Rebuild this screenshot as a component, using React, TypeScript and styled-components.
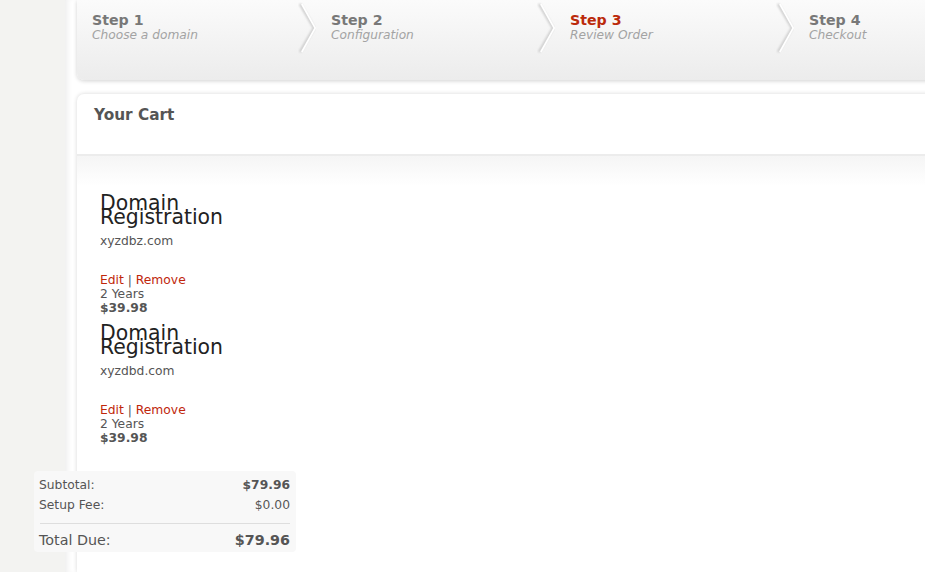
import React from "react";
import styled, { createGlobalStyle } from "styled-components";

const Global = createGlobalStyle`
  html, body { margin: 0; padding: 0; background: #f3f3f1; overflow: hidden; }
  body { font-family: "DejaVu Sans", Verdana, sans-serif; }
  * { box-sizing: border-box; }
`;

const Page = styled.div`
  display: flex;
  min-height: 572px;
  width: 100%;
`;

const Sidebar = styled.div`
  width: 65px;
  flex: none;
  background: #f3f3f1;
`;

const Main = styled.div`
  flex: 1;
  min-width: 0;
  background: #ffffff;
  box-shadow: inset 6px 0 6px -4px rgba(0, 0, 0, 0.08);
  padding: 0 0 0 12px;
  display: flex;
  flex-direction: column;
`;

const StepsBar = styled.div`
  display: flex;
  height: 80px;
  margin-right: -12px;
  border-radius: 0 0 7px 7px;
  background: linear-gradient(#fbfbfb, #ececec);
  box-shadow: 0 1px 4px rgba(0, 0, 0, 0.18);
`;

const Step = styled.div<{ $last?: boolean }>`
  display: flex;
  flex: ${(p) => (p.$last ? "1" : "none")};
  width: ${(p) => (p.$last ? "auto" : "239px")};
  padding: 12px 0 0 15px;
`;

const StepText = styled.div`
  flex: 1;
`;

const StepTitle = styled.div<{ $active?: boolean }>`
  font-size: 14.2px;
  line-height: 17px;
  font-weight: bold;
  color: ${(p) => (p.$active ? "#bb2a0b" : "#787878")};
`;

const StepSub = styled.div`
  font-size: 12.2px;
  line-height: 13px;
  font-style: italic;
  color: #a3a3a3;
`;

const Chevron = styled.svg`
  flex: none;
  width: 18px;
  height: 52px;
  margin-top: -10px;
`;

const CartPanel = styled.div`
  margin-top: 14px;
  margin-right: -12px;
  flex: 1;
  background: #fff;
  border-radius: 7px 0 0 0;
  box-shadow: 0 0 4px rgba(0, 0, 0, 0.16);
  display: flex;
  flex-direction: column;
`;

const CartHeader = styled.div`
  height: 62px;
  padding: 12px 17px;
  font-size: 15.3px;
  line-height: 19px;
  font-weight: bold;
  color: #555;
  border-bottom: 2px solid #ececec;
`;

const CartBody = styled.div`
  background: linear-gradient(#f5f5f5, #ffffff 30px);
  padding: 38px 0 20px 23px;
  display: flex;
  flex-direction: column;
  gap: 9px;
`;

const Item = styled.div`
  display: flex;
  flex-direction: column;
`;

const ItemTitle = styled.div`
  font-size: 20.4px;
  line-height: 14px;
  color: #222;
  width: 130px;
  padding-top: 2px;
`;

const ItemDomain = styled.div`
  margin-top: 10px;
  font-size: 12.3px;
  line-height: 15px;
  color: #555;
`;

const Actions = styled.div`
  margin-top: 24px;
  font-size: 12.3px;
  line-height: 14px;
  color: #555;
`;

const ActionLink = styled.a`
  color: #c0270b;
  text-decoration: none;
`;

const ItemLine = styled.div<{ $bold?: boolean }>`
  font-size: 12.3px;
  line-height: 14px;
  color: #555;
  font-weight: ${(p) => (p.$bold ? "bold" : "normal")};
`;

const Totals = styled.div`
  margin: 17px 0 0 -66px;
  width: 262px;
  background: #f8f8f8;
  border-radius: 4px;
  padding: 4px 6px 2px 5px;
`;

const TotalRow = styled.div<{ $big?: boolean }>`
  display: flex;
  justify-content: space-between;
  font-size: ${(p) => (p.$big ? "14.3px" : "12.3px")};
  line-height: 20px;
  color: #555;
`;

const Value = styled.span<{ $bold?: boolean }>`
  font-weight: ${(p) => (p.$bold ? "bold" : "normal")};
`;

const Rule = styled.hr`
  border: none;
  border-top: 1px solid #dedede;
  margin: 8px 0 6px 1px;
`;

const ChevronIcon = () => (
  <Chevron viewBox="0 0 18 52">
    <defs>
      <filter id="cb" x="-50%" y="-10%" width="200%" height="120%">
        <feGaussianBlur stdDeviation="0.9" />
      </filter>
    </defs>
    <polyline points="2,2 16,26 2,50" fill="none" stroke="#c9c9c9" strokeWidth="2.4" filter="url(#cb)" />
    <polyline points="3.8,2 17.2,26 3.8,50" fill="none" stroke="#ffffff" strokeWidth="1.6" />
  </Chevron>
);

const steps = [
  { title: "Step 1", sub: "Choose a domain" },
  { title: "Step 2", sub: "Configuration" },
  { title: "Step 3", sub: "Review Order", active: true },
  { title: "Step 4", sub: "Checkout" },
];

const items = [
  { domain: "xyzdbz.com", period: "2 Years", price: "$39.98" },
  { domain: "xyzdbd.com", period: "2 Years", price: "$39.98" },
];

export default function App() {
  return (
    <>
      <Global />
      <Page>
        <Sidebar />
        <Main>
          <StepsBar>
            {steps.map((s, i) => {
              const last = i === steps.length - 1;
              return (
                <Step key={s.title} $last={last}>
                  <StepText>
                    <StepTitle $active={s.active}>{s.title}</StepTitle>
                    <StepSub>{s.sub}</StepSub>
                  </StepText>
                  {!last && <ChevronIcon />}
                </Step>
              );
            })}
          </StepsBar>
          <CartPanel>
            <CartHeader>Your Cart</CartHeader>
            <CartBody>
              {items.map((it) => (
                <Item key={it.domain}>
                  <ItemTitle>Domain Registration</ItemTitle>
                  <ItemDomain>{it.domain}</ItemDomain>
                  <Actions>
                    <ActionLink href="#">Edit</ActionLink> | <ActionLink href="#">Remove</ActionLink>
                  </Actions>
                  <ItemLine>{it.period}</ItemLine>
                  <ItemLine $bold>{it.price}</ItemLine>
                </Item>
              ))}
              <Totals>
                <TotalRow>
                  <span>Subtotal:</span>
                  <Value $bold>$79.96</Value>
                </TotalRow>
                <TotalRow>
                  <span>Setup Fee:</span>
                  <Value>$0.00</Value>
                </TotalRow>
                <Rule />
                <TotalRow $big>
                  <span>Total Due:</span>
                  <Value $bold>$79.96</Value>
                </TotalRow>
              </Totals>
            </CartBody>
          </CartPanel>
        </Main>
      </Page>
    </>
  );
}
